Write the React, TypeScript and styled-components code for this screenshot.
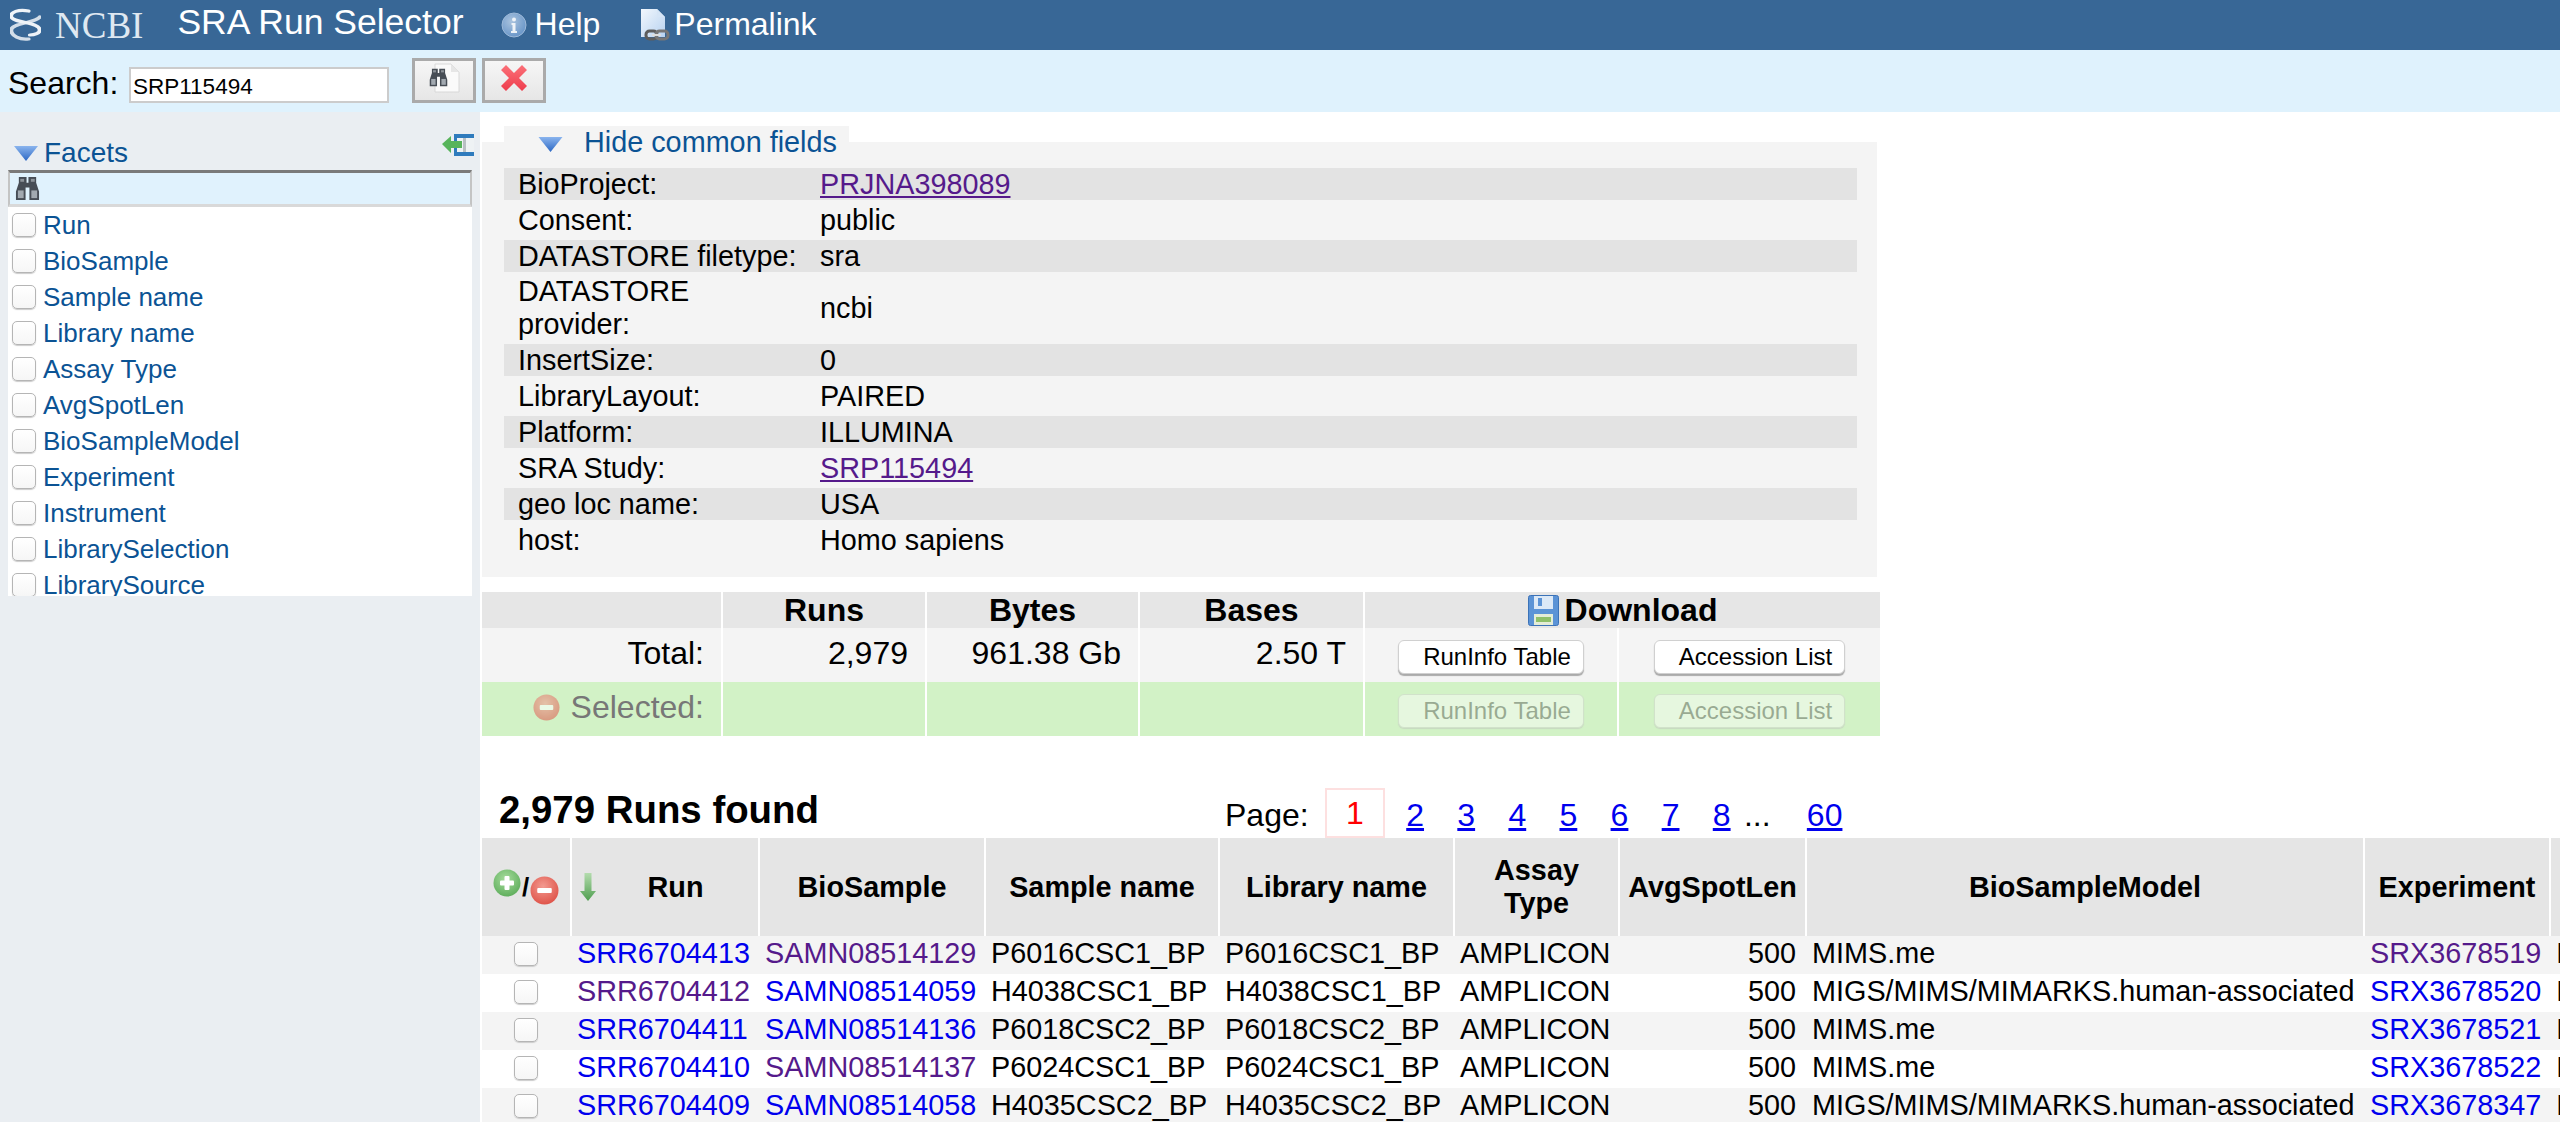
import styled, { createGlobalStyle } from 'styled-components'

const GlobalStyle = createGlobalStyle`
  html, body {
    margin: 0;
    padding: 0;
    height: 100%;
    overflow: hidden;
    background: #fff;
    font-family: "Liberation Sans", Arial, sans-serif;
    color: #000;
  }
  * { box-sizing: border-box; }
`

const facets = [
  'Run',
  'BioSample',
  'Sample name',
  'Library name',
  'Assay Type',
  'AvgSpotLen',
  'BioSampleModel',
  'Experiment',
  'Instrument',
  'LibrarySelection',
  'LibrarySource',
]

const commonFields = [
  { label: 'BioProject:', value: 'PRJNA398089', link: true },
  { label: 'Consent:', value: 'public' },
  { label: 'DATASTORE filetype:', value: 'sra' },
  { label: 'DATASTORE provider:', value: 'ncbi' },
  { label: 'InsertSize:', value: '0' },
  { label: 'LibraryLayout:', value: 'PAIRED' },
  { label: 'Platform:', value: 'ILLUMINA' },
  { label: 'SRA Study:', value: 'SRP115494', link: true },
  { label: 'geo loc name:', value: 'USA' },
  { label: 'host:', value: 'Homo sapiens' },
]

const runs = [
  { run: 'SRR6704413', runSeen: false, sample: 'SAMN08514129', sampleSeen: true, name: 'P6016CSC1_BP', model: 'MIMS.me', exp: 'SRX3678519', expSeen: true },
  { run: 'SRR6704412', runSeen: true, sample: 'SAMN08514059', sampleSeen: false, name: 'H4038CSC1_BP', model: 'MIGS/MIMS/MIMARKS.human-associated', exp: 'SRX3678520', expSeen: false },
  { run: 'SRR6704411', runSeen: false, sample: 'SAMN08514136', sampleSeen: false, name: 'P6018CSC2_BP', model: 'MIMS.me', exp: 'SRX3678521', expSeen: false },
  { run: 'SRR6704410', runSeen: false, sample: 'SAMN08514137', sampleSeen: true, name: 'P6024CSC1_BP', model: 'MIMS.me', exp: 'SRX3678522', expSeen: false },
  { run: 'SRR6704409', runSeen: false, sample: 'SAMN08514058', sampleSeen: false, name: 'H4035CSC2_BP', model: 'MIGS/MIMS/MIMARKS.human-associated', exp: 'SRX3678347', expSeen: false },
]

const columnWidths = [88, 188, 226, 234, 235, 165, 187, 558, 186, 220]

function Helix() {
  return (
    <svg width='31' height='34' viewBox='2 0 25 34' preserveAspectRatio='none' fill='none' stroke='#eef3f8' strokeWidth='3.2' strokeLinecap='round'>
      <path d='M17 3C9 1 2 4 3 9c2 6 23 5 23 13 0 3-4 5-8 5' />
      <path d='M26 9c-3 6-23 6-23 13 0 6 7 10 14 9' opacity='0.85' />
    </svg>
  )
}

function InfoIcon() {
  return (
    <svg width='26' height='26' viewBox='0 0 26 26'>
      <defs>
        <radialGradient id='infoFill' cx='0.4' cy='0.35' r='0.8'>
          <stop offset='0' stopColor='#a9c3de' />
          <stop offset='1' stopColor='#5d8dc4' />
        </radialGradient>
      </defs>
      <circle cx='13' cy='13' r='12' fill='url(#infoFill)' stroke='#9db9d8' />
      <circle cx='13' cy='7.500' r='2' fill='#eef3f8' />
      <path d='M10.500 11h4v8h1.500v2h-6v-2h1.500v-6h-1z' fill='#eef3f8' />
    </svg>
  )
}

function PermalinkIcon() {
  return (
    <svg width='30' height='32' viewBox='0 0 30 32'>
      <defs>
        <linearGradient id='pageFill' x1='0' y1='0' x2='1' y2='1'>
          <stop offset='0' stopColor='#f2f7fd' />
          <stop offset='1' stopColor='#b7d2f0' />
        </linearGradient>
      </defs>
      <path d='M1 0h16l8 8v20H1z' fill='url(#pageFill)' />
      <path d='M17 0l8 8h-8z' fill='#d6e5f6' />
      <rect x='6' y='22' width='11' height='8' rx='3.500' fill='none' stroke='#5d5d5d' strokeWidth='3' />
      <rect x='16' y='22' width='12' height='8' rx='3.500' fill='none' stroke='#777' strokeWidth='3' />
      <rect x='12' y='25' width='9' height='2' fill='#ddd' />
    </svg>
  )
}

function Binoculars({ size }: { size: number }) {
  return (
    <svg width={size} height={size} viewBox='0 0 26 26'>
      <path d='M4 1h8v6h2V1h8v6l3 9v9H15V12h-4v13H1v-9l3-9z' fill='#474d55' />
      <rect x='3' y='15' width='6' height='8' fill='#a2a9b0' />
      <rect x='17' y='15' width='6' height='8' fill='#a2a9b0' />
      <rect x='5.500' y='3' width='4' height='3' fill='#8d9399' />
      <rect x='16.500' y='3' width='4' height='3' fill='#8d9399' />
    </svg>
  )
}

function SearchDocIcon() {
  return (
    <Stacked>
      <svg width='26' height='30' viewBox='0 0 26 30'>
        <path d='M1 1h16l8 8v20H1z' fill='#fafafa' stroke='#d8d8d8' />
        <path d='M17 1l8 8h-8z' fill='#e6e6e6' />
      </svg>
      <BinocularsOverlay>
        <Binoculars size={19} />
      </BinocularsOverlay>
    </Stacked>
  )
}

function CrossIcon() {
  return (
    <svg width='28' height='28' viewBox='0 0 28 28'>
      <defs>
        <linearGradient id='crossFill' x1='0' y1='0' x2='0' y2='1'>
          <stop offset='0' stopColor='#fb7078' />
          <stop offset='1' stopColor='#ee3c4c' />
        </linearGradient>
      </defs>
      <path d='M1 6l5-5 8 8 8-8 5 5-8 8 8 8-5 5-8-8-8 8-5-5 8-8z' fill='url(#crossFill)' strokeLinejoin='round' />
    </svg>
  )
}

function FacetTriangle({ width, height }: { width: number; height: number }) {
  return (
    <svg width={width} height={height} viewBox='0 0 24 15'>
      <defs>
        <linearGradient id='triFill' x1='0' y1='0' x2='0' y2='1'>
          <stop offset='0' stopColor='#8ab4ee' />
          <stop offset='1' stopColor='#2c68c4' />
        </linearGradient>
      </defs>
      <path d='M0 0h24L12 15z' fill='url(#triFill)' />
    </svg>
  )
}

function DockIcon() {
  return (
    <svg width='32' height='26' viewBox='0 0 32 26'>
      <rect x='12' y='2' width='20' height='22' fill='#2f7bbd' />
      <rect x='15' y='6' width='17' height='14' fill='#eef2f4' />
      <rect x='21' y='6' width='3' height='14' fill='#b9c0c4' />
      <path d='M0 12l9-8v5h11v7H9v5z' fill='#57b45b' />
    </svg>
  )
}

function DiskIcon() {
  return (
    <svg width='31' height='31' viewBox='0 0 31 31'>
      <rect x='0.500' y='0.500' width='30' height='30' rx='2' fill='#5b93d6' stroke='#3c73b8' />
      <rect x='6' y='1' width='19' height='13' fill='#dce9f7' />
      <rect x='10' y='3' width='4' height='8' fill='#5b93d6' />
      <rect x='6' y='19' width='19' height='11' fill='#e4ecd8' />
      <rect x='8' y='22' width='15' height='5' fill='#8fc06a' />
    </svg>
  )
}

function RoundIcon({ kind, size }: { kind: 'plus' | 'minus'; size: number }) {
  const plus = kind === 'plus'
  const id = plus ? 'plusFill' : 'minusFill'
  return (
    <svg width={size} height={size} viewBox='0 0 28 28'>
      <defs>
        <radialGradient id={id} cx='0.45' cy='0.35' r='0.75'>
          <stop offset='0' stopColor={plus ? '#a6dc9c' : '#f39a90'} />
          <stop offset='1' stopColor={plus ? '#56a854' : '#dc4a40'} />
        </radialGradient>
      </defs>
      <circle cx='14' cy='14' r='13.500' fill={`url(#${id})`} />
      <rect x='7' y='11.500' width='14' height='5' rx='1' fill='#fff' />
      {plus && <rect x='11.500' y='7' width='5' height='14' rx='1' fill='#fff' />}
    </svg>
  )
}

function SortArrow() {
  return (
    <svg width='16' height='28' viewBox='0 0 16 28'>
      <defs>
        <linearGradient id='arrowFill' x1='0' y1='0' x2='0' y2='1'>
          <stop offset='0' stopColor='#b4dcae' />
          <stop offset='1' stopColor='#4f9e4f' />
        </linearGradient>
      </defs>
      <path d='M4.500 0h7v18H16l-8 10-8-10h4.500z' fill='url(#arrowFill)' />
    </svg>
  )
}

function App() {
  return (
    <Page>
      <GlobalStyle />
      <TopBar>
        <LogoMark>
          <Helix />
        </LogoMark>
        <LogoText>NCBI</LogoText>
        <Title>SRA Run Selector</Title>
        <TopLink $gap={8} $offset={37}>
          <InfoIcon />
          <span>Help</span>
        </TopLink>
        <TopLink $gap={4} $offset={40}>
          <PermalinkIcon />
          <span>Permalink</span>
        </TopLink>
      </TopBar>

      <SearchBar>
        <SearchLabel>Search:</SearchLabel>
        <SearchInput defaultValue='SRP115494' />
        <BevelButton>
          <SearchDocIcon />
        </BevelButton>
        <BevelButton>
          <CrossIcon />
        </BevelButton>
      </SearchBar>

      <Body>
        <Sidebar>
          <FacetsHead>
            <FacetTriangle width={24} height={15} />
            <FacetsTitle>Facets</FacetsTitle>
            <DockWrap>
              <DockIcon />
            </DockWrap>
          </FacetsHead>
          <FacetPanel>
            <FacetSearch>
              <Binoculars size={25} />
            </FacetSearch>
            {facets.map((name) => (
              <FacetRow key={name}>
                <CheckBox type='checkbox' />
                <span>{name}</span>
              </FacetRow>
            ))}
          </FacetPanel>
        </Sidebar>

        <Main>
          <CommonPanel>
            <CommonTab>
              <FacetTriangle width={25} height={15} />
              <span>Hide common fields</span>
            </CommonTab>
            {commonFields.map((field, i) => (
              <FieldRow key={field.label} $striped={i % 2 === 0}>
                <FieldLabel>{field.label}</FieldLabel>
                {field.link ? <VisitedLink href='#'>{field.value}</VisitedLink> : <span>{field.value}</span>}
              </FieldRow>
            ))}
          </CommonPanel>

          <StatsTable>
            <colgroup>
              <col width='239' />
              <col width='204' />
              <col width='213' />
              <col width='225' />
              <col width='254' />
              <col width='263' />
            </colgroup>
            <thead>
              <tr>
                <StatsHead></StatsHead>
                <StatsHead>Runs</StatsHead>
                <StatsHead>Bytes</StatsHead>
                <StatsHead>Bases</StatsHead>
                <StatsHead colSpan={2}>
                  <DownloadTitle>
                    <DiskIcon />
                    Download
                  </DownloadTitle>
                </StatsHead>
              </tr>
            </thead>
            <tbody>
              <tr>
                <StatsCell>Total:</StatsCell>
                <StatsCell>2,979</StatsCell>
                <StatsCell>961.38 Gb</StatsCell>
                <StatsCell>2.50 T</StatsCell>
                <ButtonCell>
                  <TableButton>RunInfo Table</TableButton>
                </ButtonCell>
                <ButtonCell>
                  <TableButton>Accession List</TableButton>
                </ButtonCell>
              </tr>
              <tr>
                <StatsCell $selected>
                  <SelectedLabel>
                    <FadedIcon>
                      <RoundIcon kind='minus' size={27} />
                    </FadedIcon>
                    Selected:
                  </SelectedLabel>
                </StatsCell>
                <StatsCell $selected />
                <StatsCell $selected />
                <StatsCell $selected />
                <ButtonCell $selected>
                  <TableButton disabled>RunInfo Table</TableButton>
                </ButtonCell>
                <ButtonCell $selected>
                  <TableButton disabled>Accession List</TableButton>
                </ButtonCell>
              </tr>
            </tbody>
          </StatsTable>

          <ResultsHead>
            <RunsFound>2,979 Runs found</RunsFound>
            <Pager>
              <span>Page:</span>
              <CurrentPage>1</CurrentPage>
              {[2, 3, 4, 5, 6, 7, 8].map((n) => (
                <PageLink key={n} href='#'>
                  {n}
                </PageLink>
              ))}
              <Dots>...</Dots>
              <PageLink href='#'>60</PageLink>
            </Pager>
          </ResultsHead>

          <RunsTable>
            <colgroup>
              {columnWidths.map((w, i) => (
                <col key={i} width={w} />
              ))}
            </colgroup>
            <thead>
              <tr>
                <HeadCell>
                  <SelectAll>
                    <PlusWrap>
                      <RoundIcon kind='plus' size={28} />
                    </PlusWrap>
                    <Slash>/</Slash>
                    <MinusWrap>
                      <RoundIcon kind='minus' size={29} />
                    </MinusWrap>
                  </SelectAll>
                </HeadCell>
                <HeadCell>
                  <SortedHead>
                    <SortArrow />
                    <span>Run</span>
                  </SortedHead>
                </HeadCell>
                <HeadCell>BioSample</HeadCell>
                <HeadCell>Sample name</HeadCell>
                <HeadCell>Library name</HeadCell>
                <HeadCell>Assay Type</HeadCell>
                <HeadCell>AvgSpotLen</HeadCell>
                <HeadCell>BioSampleModel</HeadCell>
                <HeadCell>Experiment</HeadCell>
                <HeadCell>Instrument</HeadCell>
              </tr>
            </thead>
            <tbody>
              {runs.map((row) => (
                <RunRow key={row.run}>
                  <CheckCell>
                    <CheckBox type='checkbox' />
                  </CheckCell>
                  <Cell>
                    <RunLink href='#' $seen={row.runSeen}>{row.run}</RunLink>
                  </Cell>
                  <Cell>
                    <RunLink href='#' $seen={row.sampleSeen}>{row.sample}</RunLink>
                  </Cell>
                  <Cell>{row.name}</Cell>
                  <Cell>{row.name}</Cell>
                  <Cell>AMPLICON</Cell>
                  <NumberCell>500</NumberCell>
                  <Cell>{row.model}</Cell>
                  <Cell>
                    <RunLink href='#' $seen={row.expSeen}>{row.exp}</RunLink>
                  </Cell>
                  <Cell>Illumina MiSeq</Cell>
                </RunRow>
              ))}
            </tbody>
          </RunsTable>
        </Main>
      </Body>
    </Page>
  )
}

export default App

const Page = styled.div`
  width: 2560px;
  height: 1122px;
  display: flex;
  flex-direction: column;
  overflow: hidden;
`

const TopBar = styled.header`
  height: 50px;
  flex: none;
  display: flex;
  align-items: center;
  padding-left: 10px;
  background: #386796;
  color: #fff;
`

const LogoMark = styled.div`
  display: flex;
`

const LogoText = styled.div`
  margin-left: 14px;
  font-family: "Liberation Serif", serif;
  font-size: 37px;
  color: #dfe8f1;
`

const Title = styled.div`
  margin-left: 34px;
  font-size: 35.5px;
  line-height: 44px;
  margin-bottom: 7px;
`

const TopLink = styled.div<{ $gap: number; $offset: number }>`
  display: flex;
  align-items: center;
  gap: ${(p) => p.$gap}px;
  margin-left: ${(p) => p.$offset}px;
  font-size: 32px;
  line-height: 46px;

  & span {
    margin-bottom: 2px;
  }
`

const SearchBar = styled.div`
  height: 62px;
  flex: none;
  display: flex;
  align-items: flex-start;
  padding: 8px 0 0 8px;
  background: #dff2fd;
`

const SearchLabel = styled.label`
  font-size: 32px;
  line-height: 50px;
  width: 121px;
`

const SearchInput = styled.input`
  width: 260px;
  height: 36px;
  margin: 9px 23px 0 0;
  padding: 3px 2px 0;
  border: 2px solid #ccc;
  background: #fff;
  font-family: "Liberation Sans", Arial, sans-serif;
  font-size: 22.5px;
  color: #000;
  outline: none;
`

const BevelButton = styled.button`
  width: 64px;
  height: 45px;
  margin-right: 6px;
  padding: 0 0 5px;
  display: flex;
  align-items: center;
  justify-content: center;
  border: 3px solid #aaa;
  background: linear-gradient(#f6f6f6, #e6e6e6);
`

const Stacked = styled.div`
  position: relative;
  display: flex;
  justify-content: flex-end;
  width: 31px;
  height: 30px;
`

const BinocularsOverlay = styled.div`
  position: absolute;
  left: 0;
  top: 5px;
  display: flex;
`

const Body = styled.div`
  flex: 1;
  min-height: 0;
  display: flex;
`

const Sidebar = styled.aside`
  width: 480px;
  flex: none;
  padding: 0 8px;
  background: #eaeef2;
`

const FacetsHead = styled.div`
  height: 58px;
  display: flex;
  align-items: center;
  padding: 24px 0 0 6px;
  color: #0b5394;
`

const FacetsTitle = styled.div`
  margin-left: 6px;
  font-size: 28px;
  line-height: 34px;
`

const DockWrap = styled.div`
  margin: 0 -2px 16px auto;
  display: flex;
`

const FacetPanel = styled.div`
  height: 426px;
  overflow: hidden;
  background: #fff;
`

const FacetSearch = styled.div`
  height: 37px;
  display: flex;
  align-items: center;
  padding-left: 5px;
  border-top: 3px solid #7a7a7a;
  border-left: 2px solid #c4c4c4;
  border-right: 2px solid #c4c4c4;
  border-bottom: 3px solid #d9d9d9;
  background: #e0f2fd;
`

const FacetRow = styled.div`
  height: 36px;
  display: flex;
  align-items: center;
  gap: 7px;
  padding-left: 4px;
  font-size: 26px;
  color: #0b5394;
`

const CheckBox = styled.input`
  appearance: none;
  flex: none;
  width: 24px;
  height: 24px;
  margin: 0;
  border: 1px solid #b5b5b5;
  border-radius: 5px;
  background: linear-gradient(#fff, #f6f6f6);
  box-shadow: 0 1px 1px #ccc;
`

const Main = styled.main`
  flex: 1;
  min-width: 0;
  margin-left: 2px;
  padding-top: 30px;
  overflow: hidden;
  background: #fff;
`

const CommonPanel = styled.section`
  display: flow-root;
  width: 1395px;
  padding: 0 20px 17px 22px;
  background: #f4f4f4;
  font-size: 28.8px;
`

const CommonTab = styled.div`
  width: 345px;
  height: 42px;
  margin-top: -16px;
  display: flex;
  gap: 21px;
  padding-left: 34px;
  background: #f4f4f4;
  line-height: 32px;
  color: #0b5394;

  & svg {
    margin-top: 11px;
  }
`

const FieldRow = styled.div<{ $striped: boolean }>`
  display: grid;
  grid-template-columns: 302px 1fr;
  align-items: center;
  min-height: ${(p) => (p.$striped ? '32px' : '40px')};
  padding: ${(p) => (p.$striped ? '0' : '3px')} 0;
  padding-left: 14px;
  background: ${(p) => (p.$striped ? '#e3e3e3' : 'transparent')};
  line-height: ${(p) => (p.$striped ? '32px' : '33px')};
`

const FieldLabel = styled.div`
  padding-right: 22px;
`

const VisitedLink = styled.a`
  color: #551a8b;
  text-decoration: underline;
`

const StatsTable = styled.table`
  width: 1398px;
  margin-top: 15px;
  table-layout: fixed;
  border-collapse: separate;
  border-spacing: 0;
  font-size: 32px;
`

const StatsHead = styled.th`
  height: 36px;
  padding: 0;
  text-align: center;
  font-weight: bold;
  font-size: 32px;
  line-height: 36px;
  background: #e6e6e6;

  & + & {
    border-left: 2px solid #fff;
  }
`

const DownloadTitle = styled.div`
  display: flex;
  align-items: center;
  justify-content: center;
  gap: 6px;
`

const StatsCell = styled.td<{ $selected?: boolean }>`
  height: 54px;
  padding: 0 17px 4px 0;
  text-align: right;
  background: ${(p) => (p.$selected ? '#d2f2c6' : '#f4f4f4')};

  & + & {
    border-left: 2px solid #fff;
  }
`

const ButtonCell = styled.td<{ $selected?: boolean }>`
  height: 54px;
  padding: 0;
  text-align: center;
  border-left: 2px solid #fff;
  background: ${(p) => (p.$selected ? '#d2f2c6' : '#f4f4f4')};
`

const TableButton = styled.button`
  height: 34px;
  padding: 0 12px 0 24px;
  border: 1px solid #d0d0d0;
  border-radius: 6px;
  background: #fff;
  box-shadow: 0 2px 1px #aaa;
  font-family: "Liberation Sans", Arial, sans-serif;
  font-size: 24px;
  line-height: 30px;
  color: #000;

  &:disabled {
    opacity: 0.45;
    color: #555;
    box-shadow: 0 1px 1px #bbb;
  }
`

const SelectedLabel = styled.div`
  display: flex;
  align-items: center;
  justify-content: flex-end;
  gap: 11px;
  color: #777;
`

const FadedIcon = styled.div`
  display: flex;
  opacity: 0.55;
`

const ResultsHead = styled.div`
  height: 50px;
  margin-top: 52px;
  display: flex;
  padding-left: 17px;
`

const RunsFound = styled.h2`
  width: 726px;
  flex: none;
  margin: 0;
  font-size: 38.4px;
  line-height: 44px;
`

const Pager = styled.div`
  height: 50px;
  display: flex;
  align-items: center;
  gap: 33.3px;
  font-size: 32px;
  line-height: 50px;
  padding-top: 3px;
`

const CurrentPage = styled.span`
  width: 60px;
  height: 50px;
  margin: -3px -12px 0 -17px;
  border: 2px solid #fde0e0;
  text-align: center;
  line-height: 46px;
  color: #f00;
`

const PageLink = styled.a`
  color: #0000ee;
  text-decoration: underline;
`

const Dots = styled.span`
  margin: 0 3px 0 -20px;
`

const RunsTable = styled.table`
  width: 2267px;
  table-layout: fixed;
  border-collapse: separate;
  border-spacing: 0;
  font-size: 28.8px;
`

const HeadCell = styled.th`
  height: 98px;
  padding: 0 5px;
  background: #e5e5e5;
  font-size: 28.8px;
  font-weight: bold;
  line-height: 33px;
  text-align: center;

  & + & {
    border-left: 2px solid #fff;
  }
`

const SelectAll = styled.div`
  display: flex;
  align-items: center;
  justify-content: center;
`

const PlusWrap = styled.div`
  display: flex;
  margin-bottom: 9px;
`

const MinusWrap = styled.div`
  display: flex;
  margin-top: 6px;
`

const Slash = styled.span`
  font-size: 26px;
  margin: 0 1px;
`

const SortedHead = styled.div`
  display: flex;
  align-items: center;

  & svg {
    margin-left: 3px;
  }

  & span {
    flex: 1;
    padding-left: 2px;
  }
`

const RunRow = styled.tr`
  height: 38px;
  background: #fff;

  &:nth-child(odd) {
    background: #f4f4f4;
  }
`

const Cell = styled.td`
  padding: 0 0 3px 7px;
  white-space: nowrap;
  overflow: hidden;
`

const CheckCell = styled.td`
  padding: 0 0 3px;

  & input {
    display: block;
    margin: 0 auto;
  }
`

const NumberCell = styled.td`
  padding: 0 9px 3px 0;
  text-align: right;
`

const RunLink = styled.a<{ $seen: boolean }>`
  color: ${(p) => (p.$seen ? '#551a8b' : '#0000ee')};
  text-decoration: none;
`
